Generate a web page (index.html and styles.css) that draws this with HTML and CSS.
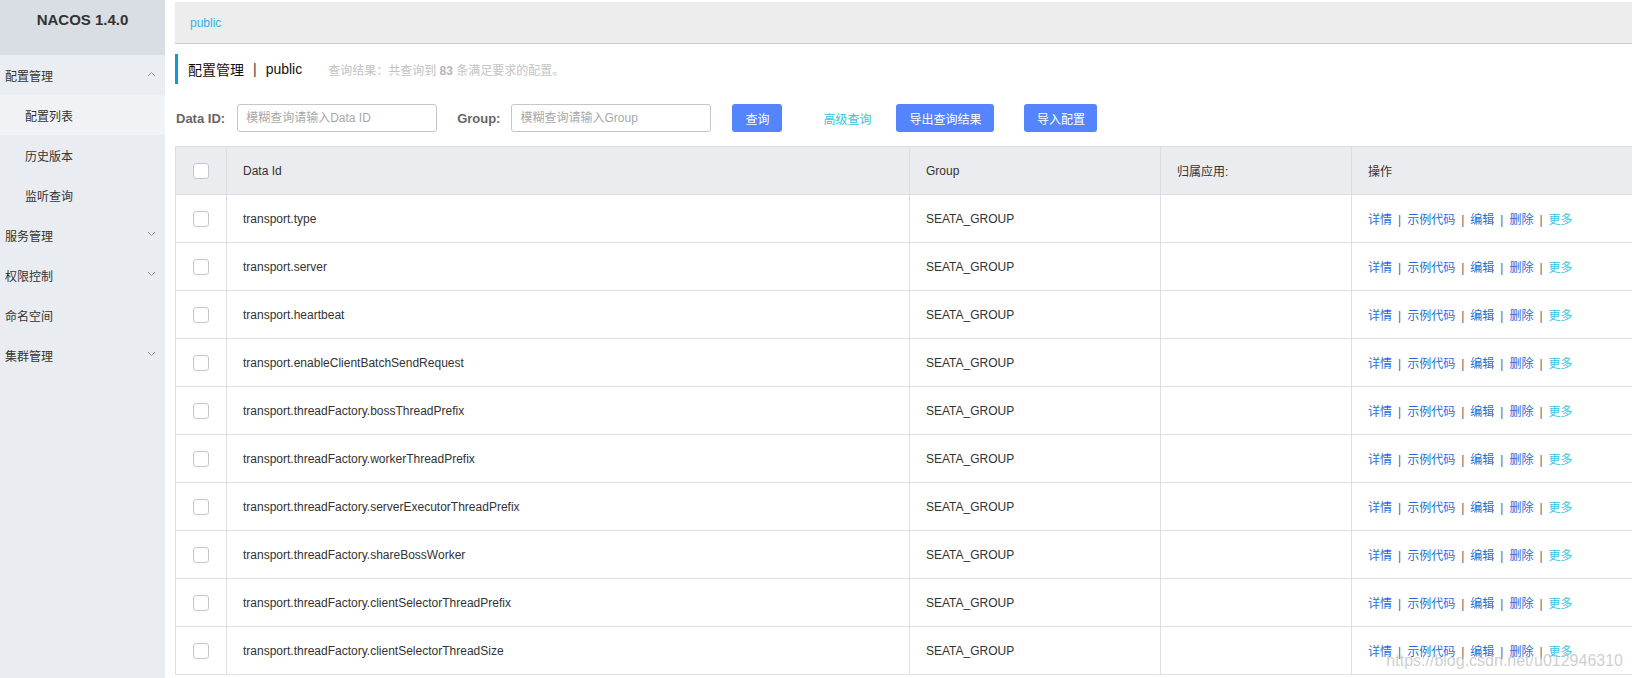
FILE: index.html
```html
<!DOCTYPE html>
<html lang="zh-CN">
<head>
  <meta charset="UTF-8" />
  <title>Nacos - 配置列表</title>
  <link rel="stylesheet" href="styles.css">
</head>
<body>
  <div class="layout">
    <aside class="sidebar">
      <div class="logo">NACOS 1.4.0</div>
      <div class="menu-item open">配置管理
        <svg class="chev" width="9" height="6" viewBox="0 0 9 6"><polyline points="1,5 4.5,1.5 8,5" /></svg>
      </div>
      <div class="sub-item active">配置列表</div>
      <div class="sub-item">历史版本</div>
      <div class="sub-item">监听查询</div>
      <div class="menu-item">服务管理
        <svg class="chev" width="9" height="6" viewBox="0 0 9 6"><polyline points="1,1 4.5,4.5 8,1" /></svg>
      </div>
      <div class="menu-item">权限控制
        <svg class="chev" width="9" height="6" viewBox="0 0 9 6"><polyline points="1,1 4.5,4.5 8,1" /></svg>
      </div>
      <div class="menu-item">命名空间</div>
      <div class="menu-item">集群管理
        <svg class="chev" width="9" height="6" viewBox="0 0 9 6"><polyline points="1,1 4.5,4.5 8,1" /></svg>
      </div>
    </aside>

    <main class="main">
      <div class="crumb"><span class="ns">public</span></div>

      <div class="page-title">
        <span class="title-main">配置管理</span>
        <span class="title-sep">|</span>
        <span class="title-main">public</span>
        <span class="title-info">查询结果：共查询到 <b>83</b> 条满足要求的配置。</span>
      </div>

      <div class="filters">
        <label class="f-label">Data ID:</label>
        <input class="f-input" type="text" placeholder="模糊查询请输入Data ID">
        <label class="f-label group-label">Group:</label>
        <input class="f-input" type="text" placeholder="模糊查询请输入Group">
        <button class="btn btn-query">查询</button>
        <a class="adv-link" href="#">高级查询</a>
        <button class="btn btn-export">导出查询结果</button>
        <button class="btn btn-import">导入配置</button>
      </div>

      <table class="cfg-table">
        <colgroup>
          <col class="c-check">
          <col class="c-id">
          <col class="c-group">
          <col class="c-app">
          <col class="c-op">
        </colgroup>
        <thead>
          <tr>
            <th class="check-cell"><span class="cb"></span></th>
            <th>Data Id</th>
            <th>Group</th>
            <th>归属应用:</th>
            <th>操作</th>
          </tr>
        </thead>
        <tbody id="rows"></tbody>
      </table>

      <div class="watermark">https://blog.csdn.net/u012946310</div>
    </main>
  </div>

  <script>
    // 配置列表数据
    const dataIds = [
      "transport.type",
      "transport.server",
      "transport.heartbeat",
      "transport.enableClientBatchSendRequest",
      "transport.threadFactory.bossThreadPrefix",
      "transport.threadFactory.workerThreadPrefix",
      "transport.threadFactory.serverExecutorThreadPrefix",
      "transport.threadFactory.shareBossWorker",
      "transport.threadFactory.clientSelectorThreadPrefix",
      "transport.threadFactory.clientSelectorThreadSize"
    ];

    const ops = '<a class="op" href="#">详情</a><span class="op-sep">|</span>' +
      '<a class="op" href="#">示例代码</a><span class="op-sep">|</span>' +
      '<a class="op" href="#">编辑</a><span class="op-sep">|</span>' +
      '<a class="op" href="#">删除</a><span class="op-sep">|</span>' +
      '<a class="op more" href="#">更多</a>';

    const tbody = document.getElementById("rows");
    tbody.innerHTML = dataIds.map(id =>
      '<tr><td class="check-cell"><span class="cb"></span></td>' +
      '<td>' + id + '</td><td>SEATA_GROUP</td><td></td><td>' + ops + '</td></tr>'
    ).join("");
  </script>
</body>
</html>
```

FILE: styles.css
```css
body {
  margin: 0;
  font-family: "Liberation Sans", "Noto Sans CJK SC", sans-serif;
  font-size: 12px;
  color: #333;
  background: #fff;
}
.layout {
  display: flex;
  height: 678px;
  overflow: hidden;
}
.sidebar {
  width: 165px;
  flex-shrink: 0;
  background-color: #e9ecf0;
}
.logo {
  height: 55px;
  box-sizing: border-box;
  padding-top: 10px;
  line-height: 20px;
  text-align: center;
  font-size: 15px;
  font-weight: bold;
  color: #333;
  background-color: #d9dde4;
}
.menu-item,
.sub-item {
  display: flex;
  align-items: center;
  height: 40px;
  padding-left: 5px;
  color: #333;
  position: relative;
}
.menu-item.open {
  background-color: #eaedf1;
}
.sub-item {
  padding-left: 25px;
}
.sub-item.active {
  background-color: #f1f2f5;
}
.chev {
  position: absolute;
  left: 147px;
  top: 16px;
  fill: none;
  stroke: #999;
  stroke-width: 1;
}

.main {
  flex: 1;
  padding-left: 10px;
  position: relative;
  min-width: 0;
}
.crumb {
  margin-top: 2px;
  height: 41px;
  border-bottom: 1px solid #cccccc;
  background-color: #ededed;
  padding-left: 15px;
  display: flex;
  align-items: center;
}
.crumb .ns {
  color: #35b3df;
  font-size: 12px;
}

.page-title {
  margin-top: 10px;
  height: 30px;
  border-left: 3px solid #0e9bd2;
  padding-left: 10px;
  display: flex;
  align-items: center;
}
.title-main {
  font-size: 14px;
  color: #111;
}
.title-sep {
  font-size: 14px;
  margin: 0 9px;
  color: #333;
}
.title-info {
  margin-left: 26px;
  color: #c3c3c3;
  font-size: 12px;
}
.title-info b {
  color: #b5b5b5;
}

.filters {
  margin-top: 20px;
  height: 28px;
  display: flex;
  align-items: center;
}
.f-label {
  font-size: 13px;
  font-weight: bold;
  color: #666;
  margin-left: 1px;
  margin-right: 12px;
}
.group-label {
  margin-left: 20px;
  margin-right: 11px;
}
.f-input {
  width: 200px;
  height: 28px;
  box-sizing: border-box;
  border: 1px solid #c4c6cf;
  border-radius: 3px;
  padding: 0 8px;
  font-family: inherit;
  font-size: 12px;
  color: #333;
  outline: none;
}
.f-input::placeholder {
  color: #a8a8a8;
}
.btn {
  height: 28px;
  border: none;
  border-radius: 3px;
  background-color: #5584ff;
  color: white;
  font-family: inherit;
  font-size: 12px;
  padding: 0;
}
.btn-query {
  width: 50px;
  margin-left: 21px;
}
.adv-link {
  margin-left: 41px;
  color: #33c3e0;
  text-decoration: none;
}
.btn-export {
  width: 98px;
  margin-left: 25px;
}
.btn-import {
  width: 73px;
  margin-left: 30px;
}

.cfg-table {
  margin-top: 14px;
  width: 1457px;
  table-layout: fixed;
  border-collapse: collapse;
}
.c-check { width: 51px; }
.c-id { width: 683px; }
.c-group { width: 251px; }
.c-app { width: 191px; }
.c-op { width: 281px; }
.cfg-table th,
.cfg-table td {
  height: 47px;
  padding: 0 16px;
  border: 1px solid #dcdee3;
  text-align: left;
  font-weight: normal;
  color: #333;
  white-space: nowrap;
}
.cfg-table th {
  background-color: #ebecf0;
}
.cfg-table th:last-child,
.cfg-table td:last-child {
  border-right: none;
}
.cfg-table .check-cell {
  padding: 0;
  text-align: center;
}
.cb {
  display: inline-block;
  width: 16px;
  height: 16px;
  box-sizing: border-box;
  border: 1px solid #c4c6cf;
  border-radius: 3px;
  background: white;
  vertical-align: middle;
}
.op {
  color: #1f6fd9;
  text-decoration: none;
}
.op.more {
  color: #35c5e0;
}
.op-sep {
  margin: 0 6px;
  color: #666;
}

.watermark {
  position: absolute;
  right: 9px;
  bottom: 8px;
  font-size: 16px;
  color: rgba(190, 190, 190, 0.75);
}
```
